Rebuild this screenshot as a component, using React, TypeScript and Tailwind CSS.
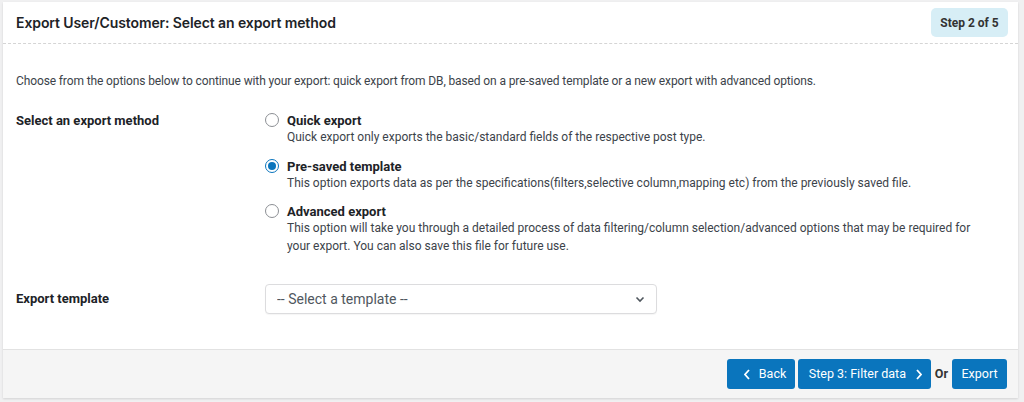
import React, { useState } from "react";

const options = [
  {
    id: "quick",
    title: "Quick export",
    text: "Quick export only exports the basic/standard fields of the respective post type.",
  },
  {
    id: "template",
    title: "Pre-saved template",
    text: "This option exports data as per the specifications(filters,selective column,mapping etc) from the previously saved file.",
  },
  {
    id: "advanced",
    title: "Advanced export",
    text: "This option will take you through a detailed process of data filtering/column selection/advanced options that may be required for your export. You can also save this file for future use.",
  },
];

const Radio = ({ checked }: { checked: boolean }) => (
  <span
    className={`mt-[1px] flex h-[14px] w-[14px] shrink-0 items-center justify-center rounded-full border bg-white ${
      checked ? "border-[#0a75bd]" : "border-[#8c8f94]"
    }`}
  >
    {checked && <span className="h-[8px] w-[8px] rounded-full bg-[#0a75bd]" />}
  </span>
);

export default function App() {
  const [method, setMethod] = useState("template");

  return (
    <div className="h-[402px] bg-[#f0f0f1] pl-[3px] pr-[6px] pt-[2px] font-['Roboto',sans-serif] text-[#1d2327]">
      <div className="bg-white shadow-[0_1px_2px_rgba(0,0,0,0.12)]">
        {/* Header */}
        <div className="flex h-[42px] items-center justify-between border-b border-dashed border-[#d5d5d5] pl-[13px] pr-[10px]">
          <h2 className="font-['Inter',sans-serif] text-[14px] font-semibold tracking-[-0.1px]">
            Export User/Customer: Select an export method
          </h2>
          <span className="flex h-[29px] w-[77px] items-center justify-center rounded-[5px] bg-[#d7eef6] text-[12px] font-bold text-[#333]">
            Step 2 of 5
          </span>
        </div>

        {/* Body */}
        <div className="px-[13px] pb-[35px] pt-[28px] text-[12px]">
          <p className="leading-[18px] tracking-[-0.12px] text-[#3c434a]">
            Choose from the options below to continue with your export: quick export from DB, based on a pre-saved template or a new export with advanced options.
          </p>

          <div className="mt-[22px] grid grid-cols-[249px_1fr]">
            <div className="text-[13px] font-bold leading-[17px]">Select an export method</div>
            <div className="flex flex-col gap-[11px]">
              {options.map((o) => (
                <label
                  key={o.id}
                  className="flex cursor-pointer gap-[8px]"
                  onClick={() => setMethod(o.id)}
                >
                  <Radio checked={method === o.id} />
                  <div className="leading-[17px]">
                    <div className="text-[13px] font-bold">{o.title}</div>
                    <div className="pr-[16px] leading-[17.5px] text-[#3c434a]">{o.text}</div>
                  </div>
                </label>
              ))}
            </div>
          </div>

          <div className="mt-[29px] grid grid-cols-[249px_1fr] items-center">
            <div className="text-[13px] font-bold">Export template</div>
            <div className="relative w-[392px]">
              <select className="h-[30px] w-full appearance-none rounded-[4px] border border-[#dcdcde] bg-white pl-[11px] text-[14px] text-[#50575e] shadow-[0_1px_1px_rgba(0,0,0,0.04)]">
                <option>-- Select a template --</option>
              </select>
              <svg
                className="pointer-events-none absolute right-[12px] top-[11px] h-[8px] w-[10px] text-[#50575e]"
                viewBox="0 0 10 8"
                fill="none"
                stroke="currentColor"
                strokeWidth={1.6}
              >
                <path d="M1.5 2.5L5 6l3.5-3.5" />
              </svg>
            </div>
          </div>
        </div>

        {/* Footer */}
        <div className="flex items-center justify-end border-t border-[#e2e2e2] bg-[#f5f5f5] pb-[9px] pr-[11px] pt-[9px]">
          <button className="flex h-[30px] w-[68px] items-center rounded-[3px] bg-[#0a75bd] pl-[17px] text-[12.5px] text-white">
            <svg className="mr-[9px] h-[11px] w-[6px]" viewBox="0 0 6 11" fill="none" stroke="currentColor" strokeWidth={1.8}>
              <path d="M5 1L1 5.5 5 10" />
            </svg>
            Back
          </button>
          <button className="ml-[3px] flex h-[30px] w-[133px] items-center rounded-[3px] bg-[#0a75bd] pl-[11px] text-[12.5px] text-white">
            Step 3: Filter data
            <svg className="ml-[10px] h-[11px] w-[6px]" viewBox="0 0 6 11" fill="none" stroke="currentColor" strokeWidth={1.8}>
              <path d="M1 1l4 4.5L1 10" />
            </svg>
          </button>
          <span className="mx-[4px] text-[12.5px] font-bold text-[#333]">Or</span>
          <button className="flex h-[30px] w-[55px] items-center justify-center rounded-[3px] bg-[#0a75bd] text-[12.5px] text-white">
            Export
          </button>
        </div>
      </div>
    </div>
  );
}
